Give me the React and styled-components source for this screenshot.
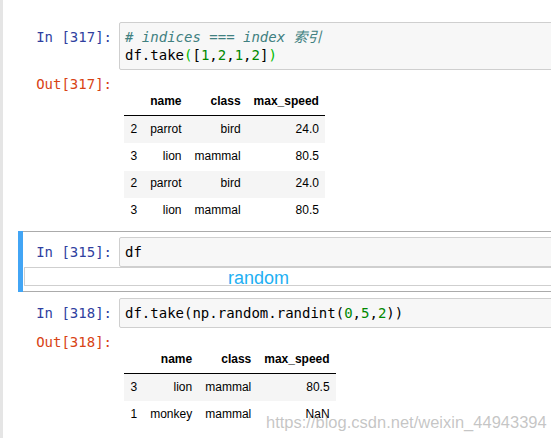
import React from 'react';
import styled, { createGlobalStyle, css } from 'styled-components';

const GlobalStyle = createGlobalStyle`
  html, body {
    margin: 0;
    padding: 0;
    background: #fff;
  }
  body {
    overflow: hidden;
  }
`;

const Page = styled.div`
  position: relative;
  width: 551px;
  height: 438px;
  box-sizing: border-box;
  overflow: hidden;
  border-left: 3px solid #e5e5e5;
  padding: 16px 0 0 15px;
`;

const Notebook = styled.div`
  width: 600px;
`;

const Cell = styled.div`
  position: relative;
  border: 1px solid ${(p) => (p.$selected ? '#ababab' : 'transparent')};
  padding: 5px;
  ${(p) =>
    p.$selected &&
    css`
      &::before {
        content: '';
        position: absolute;
        left: -1px;
        top: -1px;
        bottom: -1px;
        width: 5px;
        background: #42a5f5;
      }
    `}
`;

const Row = styled.div`
  display: flex;
  align-items: flex-start;
`;

const Prompt = styled.div`
  flex: 0 0 95px;
  box-sizing: border-box;
  padding: ${(p) => (p.$out ? '5px' : '6px')} 7px 0 0;
  text-align: right;
  font-family: 'DejaVu Sans Mono', monospace;
  font-size: 14px;
  line-height: 18px;
  white-space: pre;
  color: ${(p) => (p.$out ? '#d84315' : '#303f9f')};
`;

const InputArea = styled.div`
  flex: 1;
  background: #f7f7f7;
  border: 1px solid #cfcfcf;
  border-radius: 2px;
  padding: 5px;
  font-family: 'DejaVu Sans Mono', 'Noto Sans CJK SC', monospace;
  font-size: 14px;
  line-height: 18px;
  color: #000;
  white-space: pre;
`;

const Tok = styled.span`
  ${(p) =>
    p.$kind === 'comment' &&
    css`
      color: #408080;
      font-style: italic;
    `}
  ${(p) => p.$kind === 'num' && 'color: #008800;'}
  ${(p) => p.$kind === 'match' && 'color: #00bb00;'}
`;

const Note = styled.div`
  height: 19px;
  box-sizing: border-box;
  border: 1px solid #cfcfcf;
  background: #fff;
  padding: 2px 0 0 203px;
  font-family: 'Liberation Sans', Arial, sans-serif;
  font-size: 18px;
  line-height: 17px;
  color: #1eb0f3;
`;

const OutputBody = styled.div`
  flex: 1;
  padding: 5px 0 0 5px;
`;

const Table = styled.table`
  margin-top: 13px;
  border-collapse: collapse;
  border-spacing: 0;
  font-family: 'Liberation Sans', Arial, sans-serif;
  font-size: 12px;
  color: #000;
`;

const Th = styled.th`
  padding: 6.7px 6.5px;
  line-height: 13.8px;
  text-align: right;
  font-weight: bold;
  border-bottom: 1px solid #000;
`;

const Tr = styled.tr`
  background: ${(p) => (p.$odd ? '#f5f5f5' : '#fff')};
`;

const Td = styled.td`
  padding: 6.7px 6.5px;
  line-height: 13.8px;
  text-align: right;
  white-space: nowrap;
`;

const Watermark = styled.div`
  position: absolute;
  left: 263px;
  top: 413px;
  font-family: 'Liberation Sans', Arial, sans-serif;
  font-size: 16.5px;
  line-height: 19px;
  color: rgba(140, 140, 140, 0.5);
  white-space: nowrap;
  pointer-events: none;
`;

const columns = ['', 'name', 'class', 'max_speed'];

const DataFrame = ({ rows }) => (
  <Table>
    <thead>
      <tr>
        {columns.map((c, i) => (
          <Th key={i}>{c}</Th>
        ))}
      </tr>
    </thead>
    <tbody>
      {rows.map((r, i) => (
        <Tr key={i} $odd={i % 2 === 0}>
          {r.map((v, j) => (
            <Td key={j}>{v}</Td>
          ))}
        </Tr>
      ))}
    </tbody>
  </Table>
);

const take1 = [
  ['2', 'parrot', 'bird', '24.0'],
  ['3', 'lion', 'mammal', '80.5'],
  ['2', 'parrot', 'bird', '24.0'],
  ['3', 'lion', 'mammal', '80.5'],
];

const take2 = [
  ['3', 'lion', 'mammal', '80.5'],
  ['1', 'monkey', 'mammal', 'NaN'],
];

export default function App() {
  return (
    <>
      <GlobalStyle />
      <Page>
        <Notebook>
          <Cell>
            <Row>
              <Prompt>In [317]:</Prompt>
              <InputArea>
                <Tok $kind="comment"># indices === index 索引</Tok>
                {'\n'}
                df.take<Tok $kind="match">(</Tok>[<Tok $kind="num">1</Tok>,<Tok $kind="num">2</Tok>,
                <Tok $kind="num">1</Tok>,<Tok $kind="num">2</Tok>]<Tok $kind="match">)</Tok>
              </InputArea>
            </Row>
            <Row>
              <Prompt $out>Out[317]:</Prompt>
              <OutputBody>
                <DataFrame rows={take1} />
              </OutputBody>
            </Row>
          </Cell>

          <Cell $selected>
            <Row>
              <Prompt>In [315]:</Prompt>
              <InputArea>df</InputArea>
            </Row>
            <Note>random</Note>
          </Cell>

          <Cell>
            <Row>
              <Prompt>In [318]:</Prompt>
              <InputArea>
                df.take(np.random.randint(<Tok $kind="num">0</Tok>,<Tok $kind="num">5</Tok>,
                <Tok $kind="num">2</Tok>))
              </InputArea>
            </Row>
            <Row>
              <Prompt $out>Out[318]:</Prompt>
              <OutputBody>
                <DataFrame rows={take2} />
              </OutputBody>
            </Row>
          </Cell>
        </Notebook>
        <Watermark>https://blog.csdn.net/weixin_44943394</Watermark>
      </Page>
    </>
  );
}
